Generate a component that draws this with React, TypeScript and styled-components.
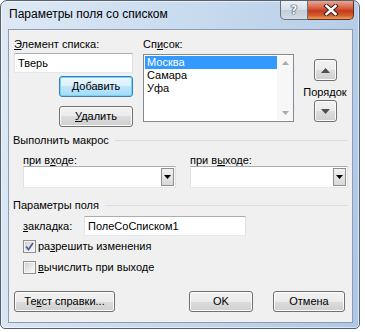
import React from 'react';
import styled, { createGlobalStyle, css } from 'styled-components';

const GlobalStyle = createGlobalStyle`
  html, body {
    margin: 0;
    padding: 0;
    background: #fff;
  }
  body {
    font-family: "Liberation Sans", Arial, sans-serif;
    font-size: 12px;
    color: #000;
  }
`;

// ----- Frame ------ //

const Window = styled.div`
  width: 360px;
  height: 329px;
  box-sizing: border-box;
  border: 1px solid #56606e;
  border-radius: 7px 7px 5px 5px;
  background: linear-gradient(100deg, #dfe9f5 0%, #cddef0 35%, #bed3ea 70%, #adc8e5 100%);
  box-shadow: inset 0 0 0 1px rgba(255, 255, 255, 0.55);
  display: flex;
  flex-direction: column;
  overflow: hidden;
`;

const TitleBar = styled.div`
  height: 28px;
  display: flex;
  align-items: flex-start;
`;

const Title = styled.div`
  flex: 1;
  padding: 6px 0 0 8px;
  line-height: 15px;
`;

const CaptionButton = styled.div<{ $close?: boolean }>`
  height: 19px;
  box-sizing: border-box;
  display: flex;
  align-items: center;
  justify-content: center;
  border: 1px solid #66707f;
  border-top: none;
  ${p =>
    p.$close
      ? css`
          width: 46px;
          margin-right: 5px;
          border-color: #6a2b1c;
          border-left: none;
          border-radius: 0 0 5px 0;
          background: linear-gradient(#e9a893 0%, #d45a3e 42%, #c33a1c 55%, #d5602f 82%, #e8a35e 100%);
        `
      : css`
          width: 28px;
          border-radius: 0 0 0 5px;
          background: linear-gradient(#eef2f7 0%, #d6dee8 48%, #c2cdda 52%, #d3dce7 100%);
        `}
`;

const HelpGlyph = styled.span`
  font-family: "DejaVu Sans", sans-serif;
  font-weight: bold;
  font-size: 12px;
  color: #f4f6f9;
  text-shadow: 0 0 1px #2f3640, 0 0 1px #2f3640, 0 0 1px #2f3640;
`;

const Client = styled.div`
  flex: 1;
  margin: 0 6px 5px 7px;
  background: #f0f0f0;
  border: 1px solid #8d9cb0;
  padding: 7px 4px 0 4px;
  display: flex;
  flex-direction: column;
  font-size: 11px;
`;

// ----- Controls ------ //

const Label = styled.div<{ $lh?: number }>`
  line-height: ${p => p.$lh ?? 15}px;
  white-space: nowrap;
`;

const U = styled.span`
  text-decoration: underline;
  text-underline-offset: 1px;
`;

const TextBox = styled.div<{ $w: number }>`
  width: ${p => p.$w}px;
  height: 20px;
  box-sizing: border-box;
  background: #fff;
  border: 1px solid #abadb3;
  border-color: #abadb3 #dbdfe6 #e3e9ef #e2e3ea;
  padding: 0 3px;
  line-height: 18px;
`;

const Button = styled.div<{ $w: number; $default?: boolean }>`
  width: ${p => p.$w}px;
  height: 21px;
  box-sizing: border-box;
  border: 1px solid #707070;
  border-radius: 3px;
  background: linear-gradient(#f2f2f2 0%, #ebebeb 50%, #dddddd 50%, #cfcfcf 100%);
  box-shadow: inset 0 0 0 1px #fbfbfb;
  display: flex;
  align-items: center;
  justify-content: center;
  line-height: 15px;
  ${p =>
    p.$default &&
    css`
      border-color: #3c7fb1;
      background: linear-gradient(#eaf6fd 0%, #d9f0fc 50%, #bee6fd 50%, #a7d9f5 100%);
      box-shadow: inset 0 0 0 1px #6fd6f8;
    `}
`;

// ----- Top area ------ //

const TopRow = styled.div`
  display: flex;
  padding-left: 1px;
`;

const LeftCol = styled.div`
  width: 119px;
  display: flex;
  flex-direction: column;
  align-items: flex-end;

  & > ${Label} {
    align-self: stretch;
    margin-bottom: 1px;
  }
`;

const AddButton = styled(Button)`
  margin-top: 3px;
`;

const RemoveButton = styled(Button)`
  margin-top: 9px;
`;

const ListCol = styled.div`
  width: 151px;
  margin-left: 10px;
`;

const ListBox = styled.div`
  margin-top: 2px;
  height: 68px;
  box-sizing: border-box;
  border: 1px solid #828790;
  background: #fff;
  display: flex;
  padding: 1px 0 1px 1px;
`;

const ListItems = styled.div`
  flex: 1;
`;

const ListItem = styled.div<{ $selected?: boolean }>`
  height: 13px;
  line-height: 13px;
  padding-left: 2px;
  ${p =>
    p.$selected &&
    css`
      background: #3399ff;
      color: #fff;
    `}
`;

const ScrollTrack = styled.div`
  width: 16px;
  background: #f7f7f7;
  display: flex;
  flex-direction: column;
  justify-content: space-between;
  align-items: center;
  padding: 5px 0;
`;

const OrderCol = styled.div`
  width: 44px;
  margin-left: 9px;
  padding-top: 22px;
  display: flex;
  flex-direction: column;
  align-items: center;

  & > ${Label} {
    margin: 4px 0 0;
  }
`;

const OrderButton = styled(Button)`
  height: 22px;
  width: 23px;
`;

// ----- Sections ------ //

const SectionHead = styled.div<{ $mt: number }>`
  display: flex;
  align-items: center;
  margin-top: ${p => p.$mt}px;
  line-height: 14px;

  &::after {
    content: '';
    flex: 1;
    height: 1px;
    margin-left: 6px;
    background: #d5dfe5;
  }
`;

const MacroRow = styled.div`
  display: flex;
  gap: 14px;
  padding-left: 10px;
  margin-top: 7px;
`;

const MacroCol = styled.div<{ $w: number }>`
  width: ${p => p.$w}px;
`;

const Combo = styled.div`
  height: 22px;
  box-sizing: border-box;
  border: 1px solid #abadb3;
  border-color: #abadb3 #dbdfe6 #e3e9ef #e2e3ea;
  background: #fff;
  display: flex;
  justify-content: flex-end;
  padding: 1px;
`;

const ComboArrow = styled.div`
  width: 13px;
  box-sizing: border-box;
  border: 1px solid #8e8f8f;
  background: linear-gradient(#f2f2f2, #d8d8d8);
  display: flex;
  align-items: center;
  justify-content: center;
`;

const FieldRow = styled.div`
  display: flex;
  align-items: center;
  padding-left: 10px;
  margin-top: 4px;

  & > ${Label} {
    width: 61px;
  }
`;

const CheckRow = styled.div<{ $mt: number }>`
  display: flex;
  align-items: center;
  padding-left: 10px;
  margin-top: ${p => p.$mt}px;
  height: 13px;
  line-height: 13px;
`;

const CheckBox = styled.div`
  width: 13px;
  height: 13px;
  box-sizing: border-box;
  border: 1px solid #8e8f8f;
  background: linear-gradient(135deg, #cdcdcd 0%, #ececec 60%, #f8f8f8 100%);
  box-shadow: inset 0 0 0 1px #f4f4f4;
  display: flex;
  align-items: center;
  justify-content: center;
  margin-right: 2px;
`;

const Footer = styled.div`
  display: flex;
  align-items: center;
  margin-top: 17px;
  padding: 0 3px 0 1px;
`;

const OkButton = styled(Button)`
  margin-left: auto;
`;

const CancelButton = styled(Button)`
  margin-left: 20px;
`;

// ----- Glyphs ------ //

const Tri = ({ up, color, w = 7, h = 4 }: { up?: boolean; color: string; w?: number; h?: number }) => (
  <svg width={w} height={h} viewBox={`0 0 ${w} ${h}`}>
    <polygon points={up ? `0,${h} ${w},${h} ${w / 2},0` : `0,0 ${w},0 ${w / 2},${h}`} fill={color} />
  </svg>
);

const CloseX = () => (
  <svg width="16" height="12" viewBox="0 0 16 12">
    <path d="M3.5 2 L12.5 10 M12.5 2 L3.5 10" stroke="#3a2620" strokeWidth="4.4" strokeLinecap="square" />
    <path d="M3.5 2 L12.5 10 M12.5 2 L3.5 10" stroke="#fff" strokeWidth="2.4" strokeLinecap="square" />
  </svg>
);

const Check = () => (
  <svg width="9" height="9" viewBox="0 0 9 9">
    <path d="M1 4.5 L3.5 7.5 L8 1" stroke="#4b6190" strokeWidth="1.8" fill="none" />
  </svg>
);

export default function App() {
  return (
    <>
      <GlobalStyle />
      <Window>
        <TitleBar>
          <Title>Параметры поля со списком</Title>
          <CaptionButton>
            <HelpGlyph>?</HelpGlyph>
          </CaptionButton>
          <CaptionButton $close>
            <CloseX />
          </CaptionButton>
        </TitleBar>

        <Client>
          <TopRow>
            <LeftCol>
              <Label>
                <U>Э</U>лемент списка:
              </Label>
              <TextBox $w={119}>Тверь</TextBox>
              <AddButton $w={74} $default>
                <span>
                  <U>Д</U>обавить
                </span>
              </AddButton>
              <RemoveButton $w={74}>
                <span>
                  <U>У</U>далить
                </span>
              </RemoveButton>
            </LeftCol>

            <ListCol>
              <Label>
                Сп<U>и</U>сок:
              </Label>
              <ListBox>
                <ListItems>
                  <ListItem $selected>Москва</ListItem>
                  <ListItem>Самара</ListItem>
                  <ListItem>Уфа</ListItem>
                </ListItems>
                <ScrollTrack>
                  <Tri up color="#a9a9a9" />
                  <Tri color="#a9a9a9" />
                </ScrollTrack>
              </ListBox>
            </ListCol>

            <OrderCol>
              <OrderButton $w={23}>
                <Tri up color="#4f4f4f" w={9} h={5} />
              </OrderButton>
              <Label>Порядок</Label>
              <OrderButton $w={23}>
                <Tri color="#4f4f4f" w={9} h={5} />
              </OrderButton>
            </OrderCol>
          </TopRow>

          <SectionHead $mt={6}>Выполнить макрос</SectionHead>
          <MacroRow>
            <MacroCol $w={153}>
              <Label $lh={12}>
                при в<U>х</U>оде:
              </Label>
              <Combo>
                <ComboArrow>
                  <Tri color="#000" />
                </ComboArrow>
              </Combo>
            </MacroCol>
            <MacroCol $w={158}>
              <Label $lh={12}>
                при в<U>ы</U>ходе:
              </Label>
              <Combo>
                <ComboArrow>
                  <Tri color="#000" />
                </ComboArrow>
              </Combo>
            </MacroCol>
          </MacroRow>

          <SectionHead $mt={10}>Параметры поля</SectionHead>
          <FieldRow>
            <Label>
              <U>з</U>акладка:
            </Label>
            <TextBox $w={162}>ПолеСоСписком1</TextBox>
          </FieldRow>
          <CheckRow $mt={4}>
            <CheckBox>
              <Check />
            </CheckBox>
            <span>
              ра<U>з</U>решить изменения
            </span>
          </CheckRow>
          <CheckRow $mt={8}>
            <CheckBox />
            <span>
              <U>в</U>ычислить при выходе
            </span>
          </CheckRow>

          <Footer>
            <Button $w={101}>
              <span>
                Те<U>к</U>ст справки...
              </span>
            </Button>
            <OkButton $w={64}>OK</OkButton>
            <CancelButton $w={72}>Отмена</CancelButton>
          </Footer>
        </Client>
      </Window>
    </>
  );
}
